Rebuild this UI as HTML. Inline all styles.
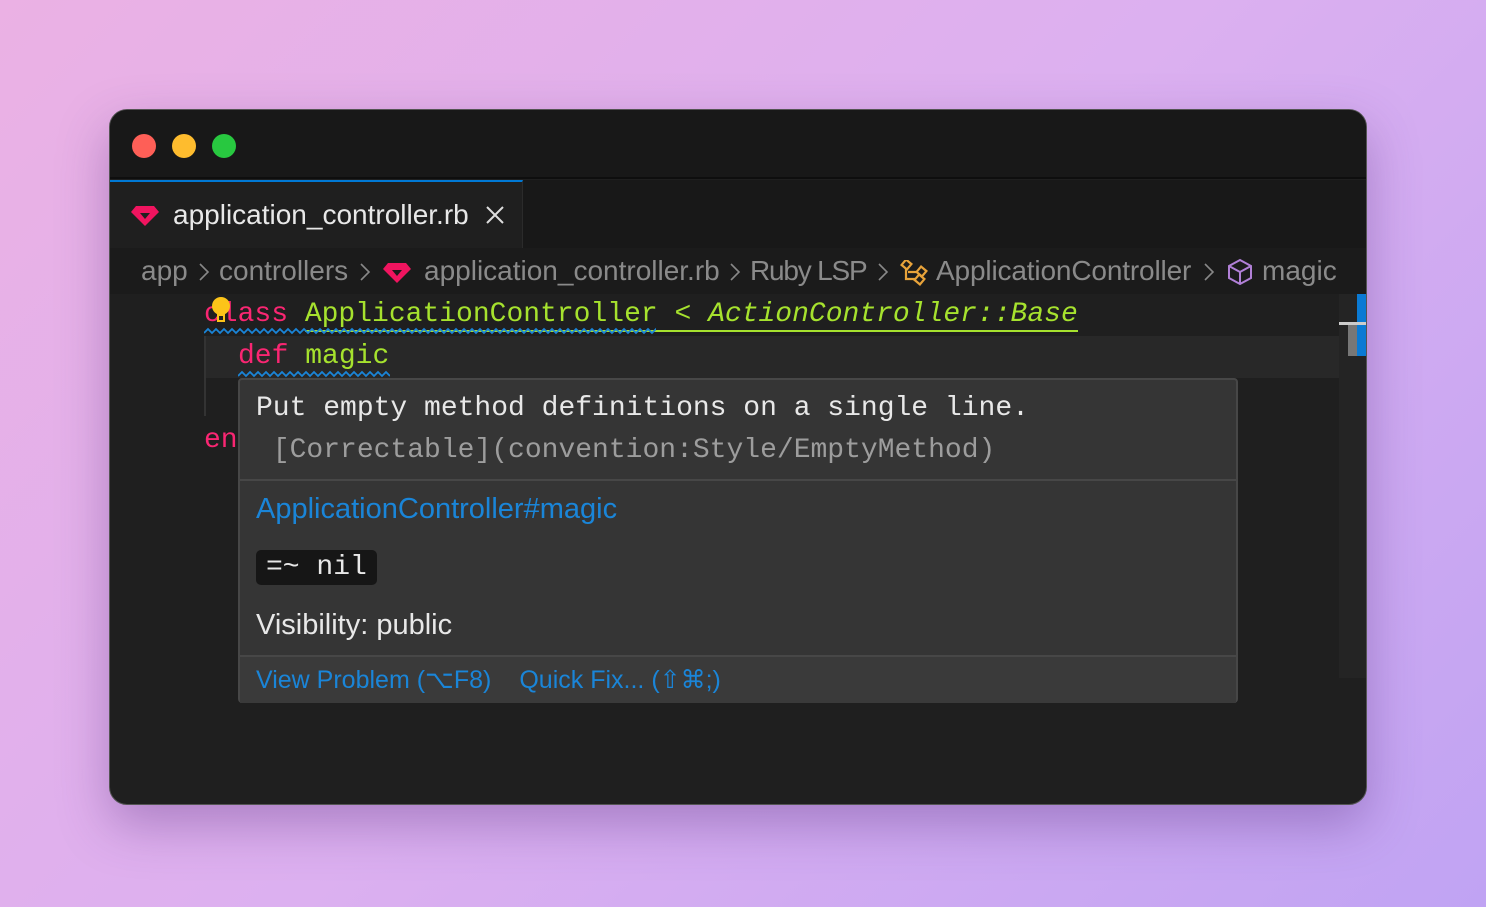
<!DOCTYPE html>
<html><head><style>
*{margin:0;padding:0;box-sizing:border-box}
body{width:1486px;height:907px;overflow:hidden;background:linear-gradient(135deg,#ebb1e4 0%,#dcb0f0 50%,#c0a3f3 100%);font-family:"Liberation Sans",sans-serif;position:relative}
.win{position:absolute;left:109px;top:109px;width:1258px;height:696px;border-radius:18px;background:#1f1f1f;overflow:hidden;border:1px solid #555;box-shadow:0 20px 50px rgba(80,40,120,.35)}
.title{position:absolute;left:0;top:0;width:100%;height:69px;background:#181818;border-bottom:2px solid #0e0e0e}
.dot{position:absolute;top:24px;width:24px;height:24px;border-radius:50%}
.tabs{position:absolute;top:70px;left:0;width:100%;height:68px;background:#181818}
.tab{position:absolute;left:0;top:0;width:413px;height:68px;background:#1f1f1f;border-top:2px solid #0078d4;border-right:1px solid #2b2b2b}
.tab span{position:absolute;left:63px;top:17px;font-size:28px;color:#e8e8e8}
.crumb{position:absolute;top:138px;left:0;width:100%;height:46px;background:#1b1b1b;font-size:28px;color:#8a8a8a;white-space:nowrap}
.crumb span{position:absolute;top:7px}
.crumb svg.ch{position:absolute;top:14px}
.mono{font-family:"Liberation Mono",monospace;font-size:28px;white-space:pre}
.line{position:absolute;left:94px;height:42px;line-height:42px}
.k{color:#f92672}.g{color:#a6e22e}
.hover{position:absolute;left:128px;top:268px;width:1000px;height:325px;background:#353535;border:2px solid #474747;border-radius:4px}
</style></head><body>
<div class="win">
 <div class="title">
  <div class="dot" style="left:22px;background:#fe5f57"></div>
  <div class="dot" style="left:62px;background:#febc2e"></div>
  <div class="dot" style="left:102px;background:#28c840"></div>
 </div>
 <div class="tabs"><div class="tab">
  <svg style="position:absolute;left:21px;top:24px" width="28" height="20" viewBox="0 0 28 20"><path d="M5 0H23L28 6L14 20L0 6Z" fill="#f0145f"/><path d="M9 7H19L14 13Z" fill="#1f1f1f"/></svg>
  <span>application_controller.rb</span>
  <svg style="position:absolute;left:376px;top:24px" width="18" height="18"><path d="M1 1L17 17M17 1L1 17" stroke="#ddd" stroke-width="2"/></svg>
 </div></div>
 <div class="crumb">
  <span style="left:31px">app</span>
  <svg class="ch" style="left:88px" width="12" height="20"><path d="M2 2L10 10L2 18" stroke="#888" stroke-width="1.6" fill="none"/></svg>
  <span style="left:109px">controllers</span>
  <svg class="ch" style="left:249px" width="12" height="20"><path d="M2 2L10 10L2 18" stroke="#888" stroke-width="1.6" fill="none"/></svg>
  <svg style="position:absolute;left:273px;top:15px" width="28" height="20" viewBox="0 0 28 20"><path d="M5 0H23L28 6L14 20L0 6Z" fill="#f0145f"/><path d="M9 7H19L14 13Z" fill="#1b1b1b"/></svg>
  <span style="left:314px">application_controller.rb</span>
  <svg class="ch" style="left:619px" width="12" height="20"><path d="M2 2L10 10L2 18" stroke="#888" stroke-width="1.6" fill="none"/></svg>
  <span style="left:640px;letter-spacing:-1.2px">Ruby LSP</span>
  <svg class="ch" style="left:767px" width="12" height="20"><path d="M2 2L10 10L2 18" stroke="#888" stroke-width="1.6" fill="none"/></svg>
  <svg style="position:absolute;left:790px;top:12px" width="28" height="26" viewBox="0 0 28 26" fill="none" stroke="#e8a33a" stroke-width="2.2"><rect x="3" y="1" width="7" height="7" transform="rotate(40 6.5 4.5)"/><path d="M6 8V19H16M8 12H18"/><rect x="18" y="8" width="7" height="7" transform="rotate(40 21.5 11.5)"/><rect x="16" y="16" width="7" height="7" transform="rotate(40 19.5 19.5)"/></svg>
  <span style="left:826px;letter-spacing:-0.15px">ApplicationController</span>
  <svg class="ch" style="left:1093px" width="12" height="20"><path d="M2 2L10 10L2 18" stroke="#888" stroke-width="1.6" fill="none"/></svg>
  <svg style="position:absolute;left:1117px;top:10px" width="26" height="28" viewBox="0 0 26 28" fill="none" stroke="#b180d7" stroke-width="2"><path d="M13 2L24 8V20L13 26L2 20V8Z M2 8L13 14L24 8 M13 14V26"/></svg>
  <span style="left:1152px">magic</span>
 </div>
 <div style="position:absolute;left:94px;top:226px;width:1135px;height:42px;background:#282828"></div>
 <div style="position:absolute;left:94px;top:226px;width:2px;height:80px;background:#333"></div>
 <div class="line mono" style="top:184px"><span class="k">class</span> <span class="g" style="border-bottom:2px solid #a6e22e">ApplicationController &lt; <i>ActionController::Base</i></span></div>
 <svg style="position:absolute;left:94px;top:217px" width="452" height="8"><path d="M0 6 l4 -4 l4 4 l4 -4 l4 4 l4 -4 l4 4 l4 -4 l4 4 l4 -4 l4 4 l4 -4 l4 4 l4 -4 l4 4 l4 -4 l4 4 l4 -4 l4 4 l4 -4 l4 4 l4 -4 l4 4 l4 -4 l4 4 l4 -4 l4 4 l4 -4 l4 4 l4 -4 l4 4 l4 -4 l4 4 l4 -4 l4 4 l4 -4 l4 4 l4 -4 l4 4 l4 -4 l4 4 l4 -4 l4 4 l4 -4 l4 4 l4 -4 l4 4 l4 -4 l4 4 l4 -4 l4 4 l4 -4 l4 4 l4 -4 l4 4 l4 -4 l4 4 l4 -4 l4 4 l4 -4 l4 4 l4 -4 l4 4 l4 -4 l4 4 l4 -4 l4 4 l4 -4 l4 4 l4 -4 l4 4 l4 -4 l4 4 l4 -4 l4 4 l4 -4 l4 4 l4 -4 l4 4 l4 -4 l4 4 l4 -4 l4 4 l4 -4 l4 4 l4 -4 l4 4 l4 -4 l4 4 l4 -4 l4 4 l4 -4 l4 4 l4 -4 l4 4 l4 -4 l4 4 l4 -4 l4 4 l4 -4 l4 4 l4 -4 l4 4 l4 -4 l4 4 l4 -4 l4 4 l4 -4 l4 4 l4 -4 l4 4 l4 -4 l4 4 l4 -4 l4 4 l4 -4 l4 4 l4 -4 l4 4 l4 -4 l4 4 l4 -4 l4 4" stroke="#1a85d8" stroke-width="1.8" fill="none"/></svg>
 <svg style="position:absolute;left:98px;top:186px" width="26" height="28"><circle cx="13" cy="10" r="9" fill="#fcc419"/><rect x="9" y="17" width="8" height="9" fill="#fcc419"/><rect x="11" y="20" width="4" height="4" fill="#222"/></svg>
 <div class="line mono" style="top:226px;left:128px"><span class="k">def</span> <span class="g">magic</span></div>
 <svg style="position:absolute;left:128px;top:260px" width="152" height="8"><path d="M0 6 l4 -4 l4 4 l4 -4 l4 4 l4 -4 l4 4 l4 -4 l4 4 l4 -4 l4 4 l4 -4 l4 4 l4 -4 l4 4 l4 -4 l4 4 l4 -4 l4 4 l4 -4 l4 4 l4 -4 l4 4 l4 -4 l4 4 l4 -4 l4 4 l4 -4 l4 4 l4 -4 l4 4 l4 -4 l4 4 l4 -4 l4 4 l4 -4 l4 4 l4 -4 l4 4" stroke="#1a85d8" stroke-width="1.8" fill="none"/></svg>
 <div class="line mono k" style="top:310px">end</div>
 <div style="position:absolute;left:1229px;top:184px;width:27px;height:384px;background:#242424"></div>
 <div style="position:absolute;left:1247px;top:184px;width:9px;height:62px;background:#0a7ad4"></div>
 <div style="position:absolute;left:1238px;top:212px;width:9px;height:34px;background:#777"></div>
 <div style="position:absolute;left:1229px;top:212px;width:27px;height:3px;background:#ccc"></div>
 <div class="hover">
  <div class="mono" style="position:absolute;left:16px;top:8px;color:#e8e8e8;line-height:42px">Put empty method definitions on a single line.<br><span style="color:#9d9d9d"> [Correctable](convention:Style/EmptyMethod)</span></div>
  <div style="position:absolute;left:0;top:99px;width:100%;height:2px;background:#474747"></div>
  <div style="position:absolute;left:16px;top:113px;font-size:29px;color:#1a85d8">ApplicationController#magic</div>
  <div class="mono" style="position:absolute;left:16px;top:170px;background:#161616;border-radius:5px;padding:0 10px;height:35px;line-height:35px;color:#e8e8e8;font-size:28px">=~ nil</div>
  <div style="position:absolute;left:16px;top:229px;font-size:29px;color:#e8e8e8">Visibility: public</div>
  <div style="position:absolute;left:0;top:275px;width:100%;height:48px;background:#3a3a3a;border-top:2px solid #474747"></div>
  <div style="position:absolute;left:16px;top:285px;font-size:25px;color:#1a85d8;white-space:nowrap">View Problem (⌥F8)<span style="margin-left:28px">Quick Fix... (⇧⌘;)</span></div>
 </div>
</div>
</body></html>
